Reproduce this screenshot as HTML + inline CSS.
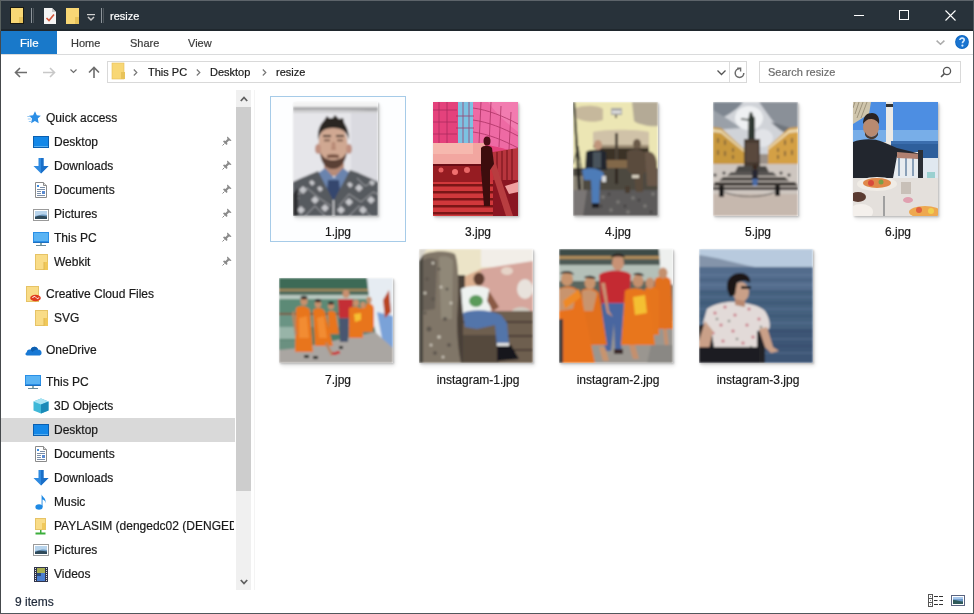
<!DOCTYPE html>
<html><head><meta charset="utf-8">
<style>
*{margin:0;padding:0;box-sizing:border-box}
html,body{width:974px;height:614px;overflow:hidden;background:#fff}
body{position:relative;will-change:transform;-webkit-text-stroke:0.2px currentColor;font-family:"Liberation Sans",sans-serif;font-size:12px;line-height:14px;color:#000}
.a{position:absolute}
svg{position:absolute;overflow:visible}
.t{position:absolute;white-space:nowrap;line-height:14px}
.nt{position:absolute;white-space:nowrap;line-height:14px;font-size:12px;color:#1a1a1a}
.ph{position:absolute;box-shadow:1px 1px 2px rgba(0,0,0,.22),2px 3px 4px rgba(0,0,0,.10)}
.ph svg{left:0;top:0}
.lbl{position:absolute;white-space:nowrap;line-height:14px;font-size:12px;color:#1a1a1a;text-align:center;width:140px}
</style></head><body>
<!-- TITLE BAR -->
<div class="a" style="left:0;top:0;width:974px;height:31px;background:#28323a"></div>
<div class="a" style="left:0;top:0;width:974px;height:1px;background:#5d646a"></div>
<div class="a" style="left:0;top:29px;width:974px;height:2px;background:#1f272d"></div>
<!-- QAT icons -->
<svg style="left:10px;top:7px" width="14" height="17" viewBox="0 0 14 17">
  <rect x="0.5" y="0.5" width="13" height="16" fill="#f8d775" stroke="#1a1a12" stroke-width="1"/>
  <rect x="9" y="10" width="4" height="6" fill="#e8c35a"/>
</svg>
<div class="a" style="left:31px;top:8px;width:1px;height:15px;background:#8d949a"></div>
<div class="a" style="left:33px;top:8px;width:1px;height:15px;background:#4d555b"></div>
<svg style="left:44px;top:8px" width="12" height="16" viewBox="0 0 12 16">
  <path d="M0 0H8L12 4V16H0Z" fill="#f4f4f4"/>
  <path d="M8 0V4H12" fill="#c9c9c9"/>
  <path d="M2.5 10L5 12.5L10 6.5" stroke="#d2553a" stroke-width="1.6" fill="none"/>
</svg>
<svg style="left:66px;top:8px" width="14" height="16" viewBox="0 0 14 16">
  <rect x="0" y="0" width="13" height="16" fill="#f8d775"/>
  <rect x="9" y="9" width="4" height="7" fill="#e8c35a"/>
</svg>
<svg style="left:87px;top:14px" width="8" height="7" viewBox="0 0 8 7">
  <rect x="0" y="0" width="8" height="1.2" fill="#d0d0d0"/>
  <path d="M1 3L4 6L7 3" stroke="#c8c8c8" stroke-width="1.5" fill="none"/>
</svg>
<div class="a" style="left:101px;top:8px;width:1px;height:15px;background:#8d949a"></div>
<div class="a" style="left:103px;top:8px;width:1px;height:15px;background:#4d555b"></div>
<div class="t" style="left:110px;top:9px;font-size:11px;color:#fff">resize</div>
<!-- window controls -->
<div class="a" style="left:854px;top:15px;width:10px;height:1px;background:#fff"></div>
<div class="a" style="left:899px;top:10px;width:10px;height:10px;border:1px solid #fff"></div>
<svg style="left:945px;top:10px" width="11" height="11" viewBox="0 0 11 11">
  <path d="M0.5 0.5L10.5 10.5M10.5 0.5L0.5 10.5" stroke="#fff" stroke-width="1.1"/>
</svg>
<!-- RIBBON TABS -->
<div class="a" style="left:1px;top:31px;width:56px;height:23px;background:#1979ca"></div>
<div class="t" style="left:20px;top:36px;font-size:11.5px;color:#fff">File</div>
<div class="t" style="left:71px;top:36px;font-size:11px;color:#3c3c3c">Home</div>
<div class="t" style="left:130px;top:36px;font-size:11px;color:#3c3c3c">Share</div>
<div class="t" style="left:188px;top:36px;font-size:11px;color:#3c3c3c">View</div>
<div class="a" style="left:1px;top:54px;width:972px;height:1px;background:#dadbdc"></div>
<svg style="left:936px;top:40px" width="9" height="5" viewBox="0 0 9 5">
  <path d="M0.6 0.6L4.5 4.2L8.4 0.6" stroke="#ababab" stroke-width="1.5" fill="none"/>
</svg>
<svg style="left:955px;top:35px" width="14" height="14" viewBox="0 0 14 14">
  <circle cx="7" cy="7" r="6.9" fill="#0b66c2"/>
  <circle cx="7" cy="7" r="6" fill="#1a74d0"/>
  <path d="M4.9 5C4.9 3.7 5.9 3.1 7.1 3.1C8.4 3.1 9.2 3.9 9.2 4.9C9.2 6.3 7.4 6.5 7.4 8.3" stroke="#d8ecff" stroke-width="1.6" fill="none"/>
  <circle cx="7.4" cy="10.6" r="1.1" fill="#d8ecff"/>
</svg>
<!-- ADDRESS ROW -->
<svg style="left:14px;top:67px" width="13" height="11" viewBox="0 0 13 11">
  <path d="M13 5.5H1.5M6 1L1.5 5.5L6 10" stroke="#6d6d6d" stroke-width="1.6" fill="none"/>
</svg>
<svg style="left:43px;top:67px" width="13" height="11" viewBox="0 0 13 11">
  <path d="M0 5.5H11.5M7 1L11.5 5.5L7 10" stroke="#c8c8c8" stroke-width="1.6" fill="none"/>
</svg>
<svg style="left:70px;top:69px" width="7" height="5" viewBox="0 0 7 5">
  <path d="M0.5 0.5L3.5 3.5L6.5 0.5" stroke="#6d6d6d" stroke-width="1.2" fill="none"/>
</svg>
<svg style="left:88px;top:66px" width="12" height="12" viewBox="0 0 12 12">
  <path d="M6 12V1.5M1 6.5L6 1.5L11 6.5" stroke="#6d6d6d" stroke-width="1.6" fill="none"/>
</svg>
<div class="a" style="left:107px;top:61px;width:640px;height:22px;border:1px solid #d9d9d9"></div>
<svg style="left:112px;top:63px" width="13" height="17" viewBox="0 0 13 17">
  <rect x="0" y="0" width="12" height="16" fill="#f8d775" stroke="#e3bd58" stroke-width="0.6"/>
  <rect x="9" y="9" width="4" height="7" fill="#e8c35a"/>
</svg>
<svg style="left:133px;top:69px" width="5" height="7" viewBox="0 0 5 7">
  <path d="M0.8 0.5L3.8 3.5L0.8 6.5" stroke="#777" stroke-width="1.2" fill="none"/>
</svg>
<div class="t" style="left:148px;top:65px;font-size:11px;color:#1a1a1a">This PC</div>
<svg style="left:196px;top:69px" width="5" height="7" viewBox="0 0 5 7">
  <path d="M0.8 0.5L3.8 3.5L0.8 6.5" stroke="#777" stroke-width="1.2" fill="none"/>
</svg>
<div class="t" style="left:210px;top:65px;font-size:11px;color:#1a1a1a">Desktop</div>
<svg style="left:262px;top:69px" width="5" height="7" viewBox="0 0 5 7">
  <path d="M0.8 0.5L3.8 3.5L0.8 6.5" stroke="#777" stroke-width="1.2" fill="none"/>
</svg>
<div class="t" style="left:276px;top:65px;font-size:11px;color:#1a1a1a">resize</div>
<svg style="left:717px;top:70px" width="9" height="6" viewBox="0 0 9 6">
  <path d="M0.5 0.5L4.5 4.5L8.5 0.5" stroke="#555" stroke-width="1.3" fill="none"/>
</svg>
<div class="a" style="left:729px;top:62px;width:1px;height:20px;background:#dcdcdc"></div>
<svg style="left:734px;top:67px" width="11" height="11" viewBox="0 0 11 11">
  <path d="M5.5 1.8A4.3 4.3 0 1 0 9.8 6.1" stroke="#6d6d6d" stroke-width="1.5" fill="none"/>
  <path d="M3.2 1.2H6.6V4.6" stroke="#6d6d6d" stroke-width="1.4" fill="none"/>
</svg>
<div class="a" style="left:759px;top:61px;width:202px;height:22px;border:1px solid #d9d9d9"></div>
<div class="t" style="left:768px;top:65px;font-size:11px;color:#6d6d6d">Search resize</div>
<svg style="left:940px;top:66px" width="12" height="12" viewBox="0 0 12 12">
  <circle cx="7" cy="5" r="3.6" stroke="#555" stroke-width="1.3" fill="none"/>
  <path d="M4.4 7.6L1 11" stroke="#555" stroke-width="1.6"/>
</svg>
<!-- NAV PANE -->
<div class="a" style="left:1px;top:418px;width:234px;height:24px;background:#d9d9d9"></div>
<div class="a" style="left:236px;top:90px;width:15px;height:500px;background:#f0f0f0"></div>
<div class="a" style="left:254px;top:90px;width:1px;height:500px;background:#f4f4f4"></div>
<div class="a" style="left:236px;top:107px;width:15px;height:384px;background:#cdcdcd"></div>
<svg style="left:240px;top:96px" width="8" height="6" viewBox="0 0 8 6">
  <path d="M0.8 5L4 1.5L7.2 5" stroke="#606060" stroke-width="1.8" fill="none"/>
</svg>
<svg style="left:240px;top:579px" width="8" height="6" viewBox="0 0 8 6">
  <path d="M0.8 1L4 4.5L7.2 1" stroke="#606060" stroke-width="1.8" fill="none"/>
</svg>
<!--NAVITEMS-->
<svg style="left:27px;top:111px" width="14" height="13" viewBox="0 0 14 13"><path d="M8 0.3L9.8 4.3L13.8 4.7L10.8 7.6L11.7 12.2L7.9 9.9L4.1 12.2L5 7.6L2 4.7L6.1 4.3Z" fill="#2b8ee6"/><path d="M0.3 5.5H3.3M0.8 8H3.8M1.8 10.5H4" stroke="#8cc4f2" stroke-width="0.9"/></svg>
<div class="nt" style="left:46px;top:111px">Quick access</div>
<svg style="left:33px;top:136px" width="16" height="12" viewBox="0 0 16 12"><rect x="0" y="0" width="16" height="12" fill="#1488e8"/><rect x="0.5" y="0.5" width="15" height="11" fill="none" stroke="#0a5fb0" stroke-width="1"/><rect x="1" y="10" width="14" height="1" fill="#56aef0"/></svg>
<div class="nt" style="left:54px;top:135px">Desktop</div>
<svg style="left:222px;top:136px" width="10" height="10" viewBox="0 0 10 10"><path d="M5.5 0.5L9.5 4.5L8.5 5L7 4.5L5 6.5L5.5 8L4.5 9L1 5.5L2 4.5L3.5 5L5.5 3L5 1.5Z" fill="#8a8a8a"/><path d="M2.5 7.5L0.5 9.5" stroke="#8a8a8a" stroke-width="1"/></svg>
<svg style="left:33px;top:158px" width="16" height="16" viewBox="0 0 16 16"><path d="M5.5 0H10.5V8H15.5L8 15.5L0.5 8H5.5Z" fill="#2f8ae0"/><path d="M8 0H10.5V8H15.5L8 15.5Z" fill="#1a6fc8"/></svg>
<div class="nt" style="left:54px;top:159px">Downloads</div>
<svg style="left:222px;top:160px" width="10" height="10" viewBox="0 0 10 10"><path d="M5.5 0.5L9.5 4.5L8.5 5L7 4.5L5 6.5L5.5 8L4.5 9L1 5.5L2 4.5L3.5 5L5.5 3L5 1.5Z" fill="#8a8a8a"/><path d="M2.5 7.5L0.5 9.5" stroke="#8a8a8a" stroke-width="1"/></svg>
<svg style="left:35px;top:182px" width="12" height="16" viewBox="0 0 12 16"><path d="M0.5 0.5H8.5L11.5 3.5V15.5H0.5Z" fill="#fff" stroke="#8a8a8a" stroke-width="1"/><path d="M8.5 0.5V3.5H11.5" fill="#ddd" stroke="#8a8a8a" stroke-width="1"/><rect x="2" y="3" width="2" height="2" fill="#3a8ae0"/><rect x="5" y="5" width="5" height="1" fill="#7a8ea8"/><rect x="2" y="7" width="8" height="1" fill="#7a8ea8"/><rect x="2" y="9" width="4" height="1" fill="#7a8ea8"/><rect x="2" y="11" width="4" height="1" fill="#7a8ea8"/><rect x="7" y="9" width="3" height="3" fill="#5a8ad0"/><rect x="2" y="13" width="8" height="1" fill="#7a8ea8"/></svg>
<div class="nt" style="left:54px;top:183px">Documents</div>
<svg style="left:222px;top:184px" width="10" height="10" viewBox="0 0 10 10"><path d="M5.5 0.5L9.5 4.5L8.5 5L7 4.5L5 6.5L5.5 8L4.5 9L1 5.5L2 4.5L3.5 5L5.5 3L5 1.5Z" fill="#8a8a8a"/><path d="M2.5 7.5L0.5 9.5" stroke="#8a8a8a" stroke-width="1"/></svg>
<svg style="left:33px;top:209px" width="16" height="12" viewBox="0 0 16 12"><rect x="0.5" y="0.5" width="15" height="11" fill="#fff" stroke="#9a9a9a" stroke-width="1"/><rect x="2" y="2" width="12" height="8" fill="#6b98c0"/><path d="M2 2H14V6C11 5 8 5.5 2 7Z" fill="#b8d4ec"/><path d="M2 8C6 6 10 7 14 7.5V10H2Z" fill="#2f4a5a"/></svg>
<div class="nt" style="left:54px;top:207px">Pictures</div>
<svg style="left:222px;top:208px" width="10" height="10" viewBox="0 0 10 10"><path d="M5.5 0.5L9.5 4.5L8.5 5L7 4.5L5 6.5L5.5 8L4.5 9L1 5.5L2 4.5L3.5 5L5.5 3L5 1.5Z" fill="#8a8a8a"/><path d="M2.5 7.5L0.5 9.5" stroke="#8a8a8a" stroke-width="1"/></svg>
<svg style="left:33px;top:232px" width="16" height="14" viewBox="0 0 16 14"><rect x="0" y="0" width="16" height="10" fill="#2a8fe6"/><rect x="1" y="1" width="14" height="8" fill="#5ab4f4"/><rect x="0" y="10" width="16" height="1" fill="#1c6fc0"/><rect x="7" y="11" width="2" height="2" fill="#8aa"/><rect x="3" y="13" width="10" height="1" fill="#6b8b9b"/></svg>
<div class="nt" style="left:54px;top:231px">This PC</div>
<svg style="left:222px;top:232px" width="10" height="10" viewBox="0 0 10 10"><path d="M5.5 0.5L9.5 4.5L8.5 5L7 4.5L5 6.5L5.5 8L4.5 9L1 5.5L2 4.5L3.5 5L5.5 3L5 1.5Z" fill="#8a8a8a"/><path d="M2.5 7.5L0.5 9.5" stroke="#8a8a8a" stroke-width="1"/></svg>
<svg style="left:35px;top:254px" width="14" height="16" viewBox="0 0 14 16"><rect x="0.5" y="0.5" width="12" height="15" fill="#f9dc87" stroke="#e6c366" stroke-width="1"/><rect x="9" y="8" width="4" height="8" fill="#f0c85a"/><path d="M9 8V16" stroke="#e0b850" stroke-width="1"/></svg>
<div class="nt" style="left:54px;top:255px">Webkit</div>
<svg style="left:222px;top:256px" width="10" height="10" viewBox="0 0 10 10"><path d="M5.5 0.5L9.5 4.5L8.5 5L7 4.5L5 6.5L5.5 8L4.5 9L1 5.5L2 4.5L3.5 5L5.5 3L5 1.5Z" fill="#8a8a8a"/><path d="M2.5 7.5L0.5 9.5" stroke="#8a8a8a" stroke-width="1"/></svg>
<svg style="left:26px;top:286px" width="16" height="16" viewBox="0 0 16 16"><rect x="0.5" y="0.5" width="12" height="15" fill="#f9dc87" stroke="#e6c366" stroke-width="1"/><ellipse cx="9.5" cy="12" rx="5.3" ry="3.3" fill="#e03c1e"/><path d="M6.5 12C7.5 10 9 10 10 11.5C11 13 12.5 13 12.8 11.5" stroke="#fff" stroke-width="1" fill="none"/></svg>
<div class="nt" style="left:46px;top:287px">Creative Cloud Files</div>
<svg style="left:35px;top:310px" width="14" height="16" viewBox="0 0 14 16"><rect x="0.5" y="0.5" width="12" height="15" fill="#f9dc87" stroke="#e6c366" stroke-width="1"/><rect x="9" y="8" width="4" height="8" fill="#f0c85a"/><path d="M9 8V16" stroke="#e0b850" stroke-width="1"/></svg>
<div class="nt" style="left:54px;top:311px">SVG</div>
<svg style="left:25px;top:345px" width="17" height="11" viewBox="0 0 17 11"><path d="M2 10.5C0.2 10.5 0 8 1.8 7.3C1.8 5 4 4 5.5 5C6.5 1 12 0.5 13 4.5C15.5 4.5 17 6.5 16.5 8.5C16.3 10 15 10.5 14 10.5Z" fill="#1878d4"/><path d="M5.5 5C6.5 1 12 0.5 13 4.5C10 4.5 8 6 7.5 7C6.5 6 6 5.5 5.5 5Z" fill="#0e5fb0"/></svg>
<div class="nt" style="left:46px;top:343px">OneDrive</div>
<svg style="left:25px;top:375px" width="16" height="14" viewBox="0 0 16 14"><rect x="0" y="0" width="16" height="10" fill="#2a8fe6"/><rect x="1" y="1" width="14" height="8" fill="#5ab4f4"/><rect x="0" y="10" width="16" height="1" fill="#1c6fc0"/><rect x="7" y="11" width="2" height="2" fill="#8aa"/><rect x="3" y="13" width="10" height="1" fill="#6b8b9b"/></svg>
<div class="nt" style="left:46px;top:375px">This PC</div>
<svg style="left:33px;top:398px" width="16" height="16" viewBox="0 0 16 16"><path d="M8 0.5L15.5 3.5V12.5L8 15.5L0.5 12.5V3.5Z" fill="#3eb8d8"/><path d="M0.5 3.5L8 6.5L15.5 3.5L8 0.5Z" fill="#a8e4f4"/><path d="M8 6.5V15.5L15.5 12.5V3.5Z" fill="#1a8ab8"/></svg>
<div class="nt" style="left:54px;top:399px">3D Objects</div>
<svg style="left:33px;top:424px" width="16" height="12" viewBox="0 0 16 12"><rect x="0" y="0" width="16" height="12" fill="#1488e8"/><rect x="0.5" y="0.5" width="15" height="11" fill="none" stroke="#0a5fb0" stroke-width="1"/><rect x="1" y="10" width="14" height="1" fill="#56aef0"/></svg>
<div class="nt" style="left:54px;top:423px">Desktop</div>
<svg style="left:35px;top:446px" width="12" height="16" viewBox="0 0 12 16"><path d="M0.5 0.5H8.5L11.5 3.5V15.5H0.5Z" fill="#fff" stroke="#8a8a8a" stroke-width="1"/><path d="M8.5 0.5V3.5H11.5" fill="#ddd" stroke="#8a8a8a" stroke-width="1"/><rect x="2" y="3" width="2" height="2" fill="#3a8ae0"/><rect x="5" y="5" width="5" height="1" fill="#7a8ea8"/><rect x="2" y="7" width="8" height="1" fill="#7a8ea8"/><rect x="2" y="9" width="4" height="1" fill="#7a8ea8"/><rect x="2" y="11" width="4" height="1" fill="#7a8ea8"/><rect x="7" y="9" width="3" height="3" fill="#5a8ad0"/><rect x="2" y="13" width="8" height="1" fill="#7a8ea8"/></svg>
<div class="nt" style="left:54px;top:447px">Documents</div>
<svg style="left:33px;top:470px" width="16" height="16" viewBox="0 0 16 16"><path d="M5.5 0H10.5V8H15.5L8 15.5L0.5 8H5.5Z" fill="#2f8ae0"/><path d="M8 0H10.5V8H15.5L8 15.5Z" fill="#1a6fc8"/></svg>
<div class="nt" style="left:54px;top:471px">Downloads</div>
<svg style="left:35px;top:494px" width="12" height="16" viewBox="0 0 12 16"><ellipse cx="4" cy="13" rx="3.6" ry="2.8" fill="#1f8ae4"/><path d="M6.6 13V0.5C7.5 3 11.5 4.5 10.5 9.5C10.5 6.5 8.5 5.5 7.5 5.5V13Z" fill="#1f8ae4"/></svg>
<div class="nt" style="left:54px;top:495px">Music</div>
<svg style="left:35px;top:518px" width="11" height="17" viewBox="0 0 11 17"><rect x="0.5" y="0.5" width="10" height="11" fill="#f9dc87" stroke="#e6c366" stroke-width="1"/><rect x="7" y="5" width="3.5" height="6.5" fill="#f0c85a"/><rect x="5" y="12" width="1.5" height="3" fill="#3cae3c"/><rect x="0.5" y="14.5" width="10" height="2" fill="#3cae3c"/></svg>
<div class="nt" style="left:54px;top:519px;width:180px;overflow:hidden">PAYLASIM (dengedc02 (DENGEDC0</div>
<svg style="left:33px;top:544px" width="16" height="12" viewBox="0 0 16 12"><rect x="0.5" y="0.5" width="15" height="11" fill="#fff" stroke="#9a9a9a" stroke-width="1"/><rect x="2" y="2" width="12" height="8" fill="#6b98c0"/><path d="M2 2H14V6C11 5 8 5.5 2 7Z" fill="#b8d4ec"/><path d="M2 8C6 6 10 7 14 7.5V10H2Z" fill="#2f4a5a"/></svg>
<div class="nt" style="left:54px;top:543px">Pictures</div>
<svg style="left:34px;top:567px" width="14" height="15" viewBox="0 0 14 15"><rect x="0" y="0" width="14" height="15" fill="#30344a"/><rect x="3" y="1" width="8" height="13" fill="#4a7ed0"/><rect x="3" y="1" width="8" height="5" fill="#a8b050"/><rect x="3" y="6" width="4" height="3" fill="#2a4a7a"/><rect x="1" y="1" width="1" height="1" fill="#e8e8e8"/><rect x="12" y="1" width="1" height="1" fill="#e8e8e8"/><rect x="1" y="3" width="1" height="1" fill="#e8e8e8"/><rect x="12" y="3" width="1" height="1" fill="#e8e8e8"/><rect x="1" y="5" width="1" height="1" fill="#e8e8e8"/><rect x="12" y="5" width="1" height="1" fill="#e8e8e8"/><rect x="1" y="7" width="1" height="1" fill="#e8e8e8"/><rect x="12" y="7" width="1" height="1" fill="#e8e8e8"/><rect x="1" y="9" width="1" height="1" fill="#e8e8e8"/><rect x="12" y="9" width="1" height="1" fill="#e8e8e8"/><rect x="1" y="11" width="1" height="1" fill="#e8e8e8"/><rect x="12" y="11" width="1" height="1" fill="#e8e8e8"/><rect x="1" y="13" width="1" height="1" fill="#e8e8e8"/><rect x="12" y="13" width="1" height="1" fill="#e8e8e8"/></svg>
<div class="nt" style="left:54px;top:567px">Videos</div>
<!--/NAVITEMS-->
<!-- CONTENT -->
<div class="a" style="left:270px;top:96px;width:136px;height:146px;border:1px solid #a6cbe8;background:#fdfeff"></div>
<!--PHOTOS-->
<!-- 1.jpg man portrait -->
<div class="ph" style="left:293px;top:102px;width:85px;height:114px">
<svg width="85" height="114" viewBox="0 0 85 114"><defs><filter id="b1" x="-5%" y="-5%" width="110%" height="110%"><feGaussianBlur stdDeviation="0.8"/></filter><clipPath id="c1"><rect width="85" height="114"/></clipPath></defs>
<g clip-path="url(#c1)" filter="url(#b1)">
<rect width="85" height="114" fill="#e6e6ea"/>
<rect x="58" y="0" width="27" height="114" fill="#dadae0"/>
<rect x="0" y="0" width="85" height="5" fill="#f2f2f2"/>
<path d="M0 5H85V9C60 9 30 8 0 8Z" fill="#a6a6a8"/>
<path d="M0 8C30 8 60 9 85 9V11H0Z" fill="#d0d0d2"/>
<!-- neck -->
<path d="M31 56H51V74H31Z" fill="#b88c78"/>
<!-- face -->
<ellipse cx="40" cy="43" rx="14.5" ry="22" fill="#d0a892"/>
<ellipse cx="25" cy="47" rx="3" ry="5" fill="#c09080"/>
<ellipse cx="56" cy="47" rx="3" ry="5" fill="#c09080"/>
<path d="M27 50C28 63 34 67 40 67C46 67 52 63 54 50C51 56 46 58 40 58C34 58 30 56 27 50Z" fill="#5a4036"/>
<path d="M34 53C37 52 43 52 46 53V56H34Z" fill="#7a5444"/>
<path d="M25 38C24 24 30 16 40 16C50 16 56 24 56 38C54 30 50 26 40 26C30 26 27 30 25 38Z" fill="#2c2622"/>
<path d="M30 20L34 14L38 18L42 13L46 17L50 16L52 24H28Z" fill="#2c2622"/>
<rect x="30" y="33" width="8" height="2" fill="#3a2a24"/>
<rect x="43" y="33" width="8" height="2" fill="#3a2a24"/>
<rect x="31" y="37" width="6" height="2.5" fill="#8a6a5a"/>
<rect x="44" y="37" width="6" height="2.5" fill="#8a6a5a"/>
<path d="M39 40L42 40L43 48H38Z" fill="#b88a76"/>
<!-- collar -->
<path d="M24 72L32 66L41 76L50 66L58 72L55 98H27Z" fill="#6a84ae"/>
<path d="M35 78H46L48 98H33Z" fill="#34466e"/>
<!-- sweater -->
<path d="M0 80C8 76 18 72 25 69L40 98V114H0Z" fill="#575a5e"/>
<path d="M85 80C77 76 67 71 57 68L41 98V114H85Z" fill="#575a5e"/>
<g fill="#d4d4d8" opacity="0.9">
<path d="M6 88L10 84L14 88L10 92Z"/><path d="M18 98L22 94L26 98L22 102Z"/><path d="M4 108L8 104L12 108L8 112Z"/>
<path d="M28 106L32 102L36 106L32 110Z"/><path d="M62 86L66 82L70 86L66 90Z"/><path d="M74 98L78 94L82 98L78 102Z"/>
<path d="M52 100L56 96L60 100L56 104Z"/><path d="M66 108L70 104L74 108L70 112Z"/><path d="M44 108L48 104L52 108L48 112Z"/>
<path d="M16 80L19 78L22 81L19 84Z"/><path d="M76 80L79 78L82 81L79 84Z"/><path d="M54 82L57 80L60 83L57 86Z"/><path d="M24 86L27 84L30 87L27 90Z"/>
</g>
<g stroke="#b0b2b6" stroke-width="1" opacity="0.8" fill="none">
<path d="M0 96L14 86L26 96L38 104M0 100L6 96M12 114L22 104L32 114M46 104L56 92L68 100L80 90L85 92M56 114L66 104L78 114M64 76L72 84L85 78"/>
</g>
<path d="M0 114V92L5 86V114Z" fill="#2e2e30"/>
</g></svg></div>
<!-- 3.jpg red dome -->
<div class="ph" style="left:433px;top:102px;width:85px;height:114px">
<svg width="85" height="114" viewBox="0 0 85 114"><defs><filter id="b3" x="-5%" y="-5%" width="110%" height="110%"><feGaussianBlur stdDeviation="0.7"/></filter><clipPath id="c3"><rect width="85" height="114"/></clipPath></defs>
<g clip-path="url(#c3)" filter="url(#b3)">
<rect width="85" height="114" fill="#c8303a"/>
<rect width="85" height="50" fill="#e4427c"/>
<path d="M40 0H85V52C72 46 56 42 40 42Z" fill="#ee6aa4"/>
<path d="M55 0H85V30C72 20 62 10 55 0Z" fill="#f27cb0"/>
<path d="M25 0H40L40 41H25Z" fill="#7cc2e2"/>
<g stroke="#a02858" stroke-width="0.9" fill="none" opacity="0.75">
<path d="M0 8H24M0 20H24M0 32H24M6 0V42M14 0V42M30 0V41M36 0V41M23 14H41M23 26H41"/>
<path d="M40 6C55 8 70 14 85 22M40 18C55 20 70 26 85 34M40 30C55 32 70 38 85 46M48 0L46 42M58 0L56 43M68 4L66 45M78 10L76 48"/>
</g>
<!-- pale band -->
<path d="M0 41H52V62H0Z" fill="#f2a6a0"/>
<path d="M0 41H40V52H0Z" fill="#f6b8ae"/>
<!-- dark ledge -->
<path d="M0 62H50V80H0Z" fill="#961a22"/>
<circle cx="8" cy="68" r="2.5" fill="#e86060"/>
<circle cx="22" cy="70" r="3" fill="#f07070"/>
<circle cx="34" cy="68" r="3" fill="#e86868"/>
<rect x="0" y="62" width="50" height="2" fill="#6a0e14"/>
<!-- stairs -->
<rect x="0" y="80" width="60" height="34" fill="#d0383a"/>
<g fill="#7a1218">
<rect x="0" y="82" width="60" height="2.5"/><rect x="0" y="89" width="60" height="2.5"/><rect x="0" y="96" width="60" height="2.5"/><rect x="0" y="103" width="60" height="2.5"/><rect x="0" y="110" width="60" height="2.5"/>
</g>
<!-- railing right -->
<path d="M60 50L85 46V78L60 82Z" fill="#b8343c"/>
<g stroke="#6a0e14" stroke-width="0.9"><path d="M64 50V80M69 49V80M74 48V79M79 47V79"/></g>
<path d="M60 78H85V114H60Z" fill="#8a1820"/>
<path d="M72 84L85 80V90L76 92Z" fill="#f0a0a0"/>
<path d="M55 58L61 56L80 114H73Z" fill="#b83c40"/>
<!-- figure -->
<ellipse cx="54" cy="39" rx="3.5" ry="4.5" fill="#4a1014"/>
<path d="M48 46C50 43 57 43 59 46L61 62L57 68V104H51L48 68Z" fill="#3e0c10"/>
</g></svg></div>
<!-- 4.jpg statue bench -->
<div class="ph" style="left:573px;top:102px;width:85px;height:114px">
<svg width="85" height="114" viewBox="0 0 85 114"><defs><filter id="b4" x="-5%" y="-5%" width="110%" height="110%"><feGaussianBlur stdDeviation="0.8"/></filter><clipPath id="c4"><rect width="85" height="114"/></clipPath></defs>
<g clip-path="url(#c4)" filter="url(#b4)">
<rect width="85" height="114" fill="#ece6b4"/>
<path d="M3 6C10 3 25 3 30 7V18C22 21 10 20 3 16Z" fill="#c6b89c"/>
<path d="M59 0H85V24C78 25 66 23 61 19Z" fill="#b4aa96"/>
<rect x="38" y="6" width="11" height="7" fill="#a8a8a8"/>
<rect x="39" y="9" width="9" height="2" fill="#e8e8e8"/>
<rect x="42" y="13" width="2" height="3" fill="#605850"/>
<!-- lintel -->
<path d="M20 30C30 27 66 27 76 30V46H20Z" fill="#d0c2a8"/>
<rect x="20" y="43" width="56" height="3" fill="#9a8a72"/>
<!-- recess -->
<rect x="26" y="46" width="50" height="20" fill="#3a3228"/>
<rect x="42" y="31" width="3" height="30" fill="#4c4238"/>
<!-- lower wall -->
<rect x="0" y="66" width="85" height="24" fill="#4e4840"/>
<rect x="0" y="74" width="10" height="16" fill="#8a8476"/>
<!-- pole -->
<path d="M0 0H2L8 88H5Z" fill="#1e1e1e"/>
<path d="M5 44L0 62M5 44L9 70" stroke="#2a2a2a" stroke-width="1"/>
<!-- ground -->
<path d="M0 88H85V114H0Z" fill="#5c5a5a"/>
<path d="M0 88H14L10 114H0Z" fill="#7a7674"/>
<g fill="#777472"><circle cx="30" cy="95" r="2"/><circle cx="45" cy="100" r="2"/><circle cx="60" cy="96" r="2"/><circle cx="72" cy="104" r="2"/><circle cx="38" cy="108" r="2"/><circle cx="55" cy="110" r="2"/><circle cx="80" cy="92" r="2"/></g>
<g fill="#444242"><circle cx="36" cy="92" r="1.5"/><circle cx="52" cy="104" r="1.5"/><circle cx="66" cy="98" r="1.5"/><circle cx="78" cy="110" r="1.5"/><circle cx="28" cy="104" r="1.5"/></g>
<!-- table -->
<path d="M28 58H60L62 66H26Z" fill="#826848"/>
<rect x="42" y="66" width="3" height="16" fill="#2e2820"/>
<!-- man -->
<ellipse cx="25" cy="43" rx="4" ry="5" fill="#c0967c"/>
<path d="M13 50C15 47 30 47 33 50L34 68H12Z" fill="#23272d"/>
<path d="M20 50H28V66H20Z" fill="#4a525c"/>
<path d="M9 68C14 65 28 66 31 72L30 78H27L26 103H19L18 78H11Z" fill="#4e7cb8"/>
<rect x="19" y="101" width="7" height="5" fill="#1a1a22"/>
<rect x="29" y="74" width="4" height="6" fill="#d8d8d8"/>
<!-- statue -->
<ellipse cx="64" cy="42" rx="4" ry="5" fill="#6a5a48"/>
<path d="M54 50C58 46 68 46 74 52L76 68L70 72V90H63L61 74L54 68Z" fill="#5a4c3e"/>
<path d="M72 50C80 48 84 54 84 64V84H74Z" fill="#6a5848"/>
<rect x="52" y="84" width="5" height="7" fill="#4a3c30"/>
<rect x="59" y="73" width="7" height="3" fill="#d8d0c0"/>
</g></svg></div>
<!-- 5.jpg Duke statue -->
<div class="ph" style="left:713px;top:102px;width:85px;height:114px">
<svg width="85" height="114" viewBox="0 0 85 114"><defs><filter id="b5" x="-5%" y="-5%" width="110%" height="110%"><feGaussianBlur stdDeviation="0.9"/></filter><clipPath id="c5"><rect width="85" height="114"/></clipPath></defs>
<g clip-path="url(#c5)" filter="url(#b5)">
<rect width="85" height="114" fill="#c6bcb4"/>
<!-- sky -->
<rect width="85" height="62" fill="#d0d3d8"/>
<path d="M0 0H30C24 8 14 14 0 20Z" fill="#7e8690"/>
<path d="M0 8C10 14 20 20 28 26L0 28Z" fill="#9aa0a8"/>
<path d="M46 0H85V34C76 30 64 26 56 14Z" fill="#8a9098"/>
<path d="M58 20C66 28 74 34 85 34V28C76 26 66 22 58 20Z" fill="#6e747c"/>
<ellipse cx="36" cy="16" rx="14" ry="12" fill="#eef0f2"/>
<ellipse cx="50" cy="36" rx="10" ry="9" fill="#e2e4e8"/>
<!-- buildings -->
<path d="M0 25L8 26L31 47V62H0Z" fill="#c8983c"/>
<path d="M0 27L8 28L31 48V50L8 31L0 30Z" fill="#e8d8b0"/>
<g fill="#8a6a3a"><rect x="4" y="36" width="2" height="5"/><rect x="11" y="38" width="2" height="5"/><rect x="4" y="48" width="2" height="5"/><rect x="11" y="49" width="2" height="5"/><rect x="19" y="46" width="2" height="4"/><rect x="19" y="53" width="2" height="4"/></g>
<path d="M85 25L76 26L55 45V62H85Z" fill="#d4a044"/>
<path d="M85 27L76 28L55 46V48L76 31L85 30Z" fill="#ecdab2"/>
<g fill="#8a6a3a"><rect x="78" y="36" width="2" height="5"/><rect x="71" y="38" width="2" height="5"/><rect x="78" y="48" width="2" height="5"/><rect x="71" y="49" width="2" height="5"/><rect x="64" y="46" width="2" height="4"/><rect x="64" y="53" width="2" height="4"/></g>
<rect x="31" y="52" width="24" height="10" fill="#9a9088"/>
<!-- plaza -->
<rect x="0" y="62" width="85" height="52" fill="#cec6c0"/>
<rect x="0" y="92" width="85" height="22" fill="#c6b8ae"/>
<!-- statue -->
<path d="M37 10C39 9.5 40 11 39.5 13L42 16L42 37H35L35.5 16Z" fill="#2e3830"/>
<path d="M28 17L37 18" stroke="#2e3830" stroke-width="1.6"/>
<path d="M31 37H47V64H31Z" fill="#463a32"/>
<rect x="33" y="41" width="12" height="19" fill="#5a4a3e"/>
<!-- steps -->
<path d="M25 64H53L56 70H22Z" fill="#4a4644"/>
<path d="M18 70H60L64 74H14Z" fill="#5a5654"/>
<path d="M10 75H72L76 79H6Z" fill="#484442"/>
<path d="M2 80H82L85 84H0Z" fill="#3c3836"/>
<path d="M0 85H85V88H0Z" fill="#3a3634"/>
<rect x="0" y="74" width="85" height="1" fill="#d0c8c0"/>
<rect x="0" y="79" width="85" height="1" fill="#d0c8c0"/>
<rect x="0" y="84" width="85" height="1" fill="#d0c8c0"/>
<!-- figure -->
<ellipse cx="42" cy="65" rx="2.5" ry="3" fill="#3a2a22"/>
<path d="M39 68H45V77H39Z" fill="#262630"/>
<path d="M39 77H45L44 84H40Z" fill="#4a6ca8"/>
<!-- bollards -->
<rect x="6" y="84" width="5" height="11" fill="#1c1c1c"/>
<rect x="62" y="83" width="5" height="11" fill="#1c1c1c"/>
<circle cx="2" cy="73" r="1.5" fill="#222"/><circle cx="11" cy="71" r="1.5" fill="#222"/><circle cx="68" cy="71" r="1.5" fill="#222"/><circle cx="76" cy="73" r="1.5" fill="#222"/>
<path d="M11 90C25 96 50 96 62 90" stroke="#333" stroke-width="0.8" fill="none"/>
</g></svg></div>
<!-- 6.jpg seaside lunch -->
<div class="ph" style="left:853px;top:102px;width:85px;height:114px">
<svg width="85" height="114" viewBox="0 0 85 114"><defs><filter id="b6" x="-5%" y="-5%" width="110%" height="110%"><feGaussianBlur stdDeviation="0.7"/></filter><clipPath id="c6"><rect width="85" height="114"/></clipPath></defs>
<g clip-path="url(#c6)" filter="url(#b6)">
<rect width="85" height="114" fill="#dcd8d4"/>
<!-- sky -->
<rect x="0" y="0" width="85" height="40" fill="#4d8ee2"/>
<rect x="0" y="28" width="85" height="12" fill="#78aee8"/>
<!-- awning -->
<path d="M0 0H18L16 12L0 22Z" fill="#cfc5ac"/>
<g stroke="#8a8068" stroke-width="0.7"><path d="M2 0L0 6M6 0L2 12M10 0L4 16M14 0L8 16"/></g>
<!-- pillar -->
<rect x="33" y="0" width="7" height="42" fill="#eceae6"/>
<rect x="33" y="2" width="7" height="3" fill="#333"/>
<!-- sea -->
<rect x="38" y="39" width="47" height="26" fill="#2f5f9c"/>
<rect x="38" y="39" width="47" height="3" fill="#3a6eae"/>
<!-- railing -->
<path d="M34 50H70V76H34Z" fill="#e8ecf0"/>
<g fill="#8aa0b8"><rect x="38" y="54" width="2" height="20"/><rect x="45" y="54" width="2" height="20"/><rect x="52" y="54" width="2" height="20"/><rect x="59" y="54" width="2" height="20"/></g>
<rect x="34" y="50" width="36" height="3" fill="#f4f4f4"/>
<!-- man -->
<path d="M0 40C8 37 20 36 30 40L44 46L68 52V57L44 54L40 76H0Z" fill="#22262e"/>
<path d="M44 50L68 52V57L44 56Z" fill="#b08070"/>
<ellipse cx="18" cy="25" rx="8" ry="10" fill="#b88a70"/>
<path d="M10 22C10 14 14 11 19 11C24 11 27 15 26 22C24 18 20 17 18 17C14 17 12 19 10 22Z" fill="#2a2420"/>
<path d="M12 30C14 36 22 37 25 30V33C22 39 14 38 12 33Z" fill="#4a3a30"/>
<!-- bottle & glass right -->
<rect x="65" y="48" width="5" height="28" fill="#2a2e34"/>
<rect x="70" y="56" width="15" height="20" fill="#e0e8f0"/>
<rect x="74" y="70" width="8" height="10" fill="#9ad0d0"/>
<!-- table -->
<rect x="0" y="76" width="85" height="38" fill="#e4e0dc"/>
<ellipse cx="24" cy="82" rx="20" ry="7" fill="#f0ece6"/>
<ellipse cx="24" cy="81" rx="14" ry="5" fill="#e0884a"/>
<circle cx="18" cy="81" r="3" fill="#d84a3a"/><circle cx="28" cy="80" r="2.5" fill="#7aa04a"/>
<rect x="48" y="80" width="10" height="12" fill="#c8c0b8"/>
<ellipse cx="55" cy="98" rx="5" ry="3" fill="#e0a0b0"/>
<ellipse cx="5" cy="95" rx="8" ry="5" fill="#5a3a30"/>
<ellipse cx="8" cy="110" rx="12" ry="8" fill="#f4f0ec"/>
<ellipse cx="72" cy="110" rx="16" ry="6" fill="#eea850"/>
<circle cx="66" cy="108" r="3" fill="#e06040"/><circle cx="78" cy="109" r="3" fill="#f0d050"/>
<rect x="30" y="94" width="2" height="20" fill="#a0a0a0"/>
</g></svg></div>
<!-- 7.jpg monks landscape -->
<div class="ph" style="left:279px;top:278px;width:114px;height:85px">
<svg width="114" height="85" viewBox="0 0 114 85"><defs><filter id="b7" x="-5%" y="-5%" width="110%" height="110%"><feGaussianBlur stdDeviation="0.8"/></filter><clipPath id="c7"><rect width="114" height="85"/></clipPath></defs>
<g clip-path="url(#c7)" filter="url(#b7)">
<rect width="114" height="85" fill="#a6a29e"/>
<!-- wall stripes -->
<rect x="0" y="0" width="96" height="72" fill="#4e7c68"/>
<rect x="0" y="0" width="96" height="11" fill="#3c6a56"/>
<rect x="0" y="11" width="96" height="2" fill="#a88a58"/>
<rect x="0" y="13" width="96" height="4" fill="#506c5c"/>
<rect x="0" y="17" width="96" height="4" fill="#b8c8c0"/>
<rect x="0" y="21" width="96" height="14" fill="#5c8a76"/>
<rect x="0" y="35" width="96" height="2" fill="#7a5a40"/>
<rect x="0" y="37" width="96" height="12" fill="#6a9484"/>
<rect x="0" y="49" width="20" height="12" fill="#98b4a8"/>
<rect x="0" y="62" width="20" height="10" fill="#6a9080"/>
<!-- right side white/blue -->
<path d="M88 0H114V62L100 66L92 36Z" fill="#e6ecf2"/>
<path d="M98 34L114 38V72L104 66Z" fill="#7aa2d8"/>
<path d="M104 22L110 12L112 34L106 40Z" fill="#b84424"/>
<!-- ground -->
<path d="M0 72L20 70L96 54L114 70V85H0Z" fill="#aaa6a2"/>
<!-- man -->
<ellipse cx="67" cy="16" rx="3.5" ry="4" fill="#c89070"/>
<path d="M59 21H74L73 40H60Z" fill="#c42e34"/>
<path d="M60 40H70L69 64H61Z" fill="#4a5670"/>
<!-- monks -->
<g fill="#e8741a">
<path d="M17 30C20 27 28 27 31 32L34 74H16Z"/>
<path d="M34 32C37 29 44 29 46 34L54 68H36Z"/>
<path d="M49 34C51 32 56 32 57 36L60 56H50Z"/>
<path d="M70 30C74 28 82 28 84 34L84 60H70Z"/>
<path d="M82 30C86 28 90 28 92 34L94 54H84Z"/>
<path d="M87 26C90 24 94 26 95 30V50H88Z"/>
</g>
<g fill="#f28c30"><path d="M20 40L28 38L30 60H20Z"/><path d="M38 40L45 38L48 60H40Z"/></g>
<path d="M75 36L82 35L82 42L76 44Z" fill="#f6c030"/>
<g fill="#c8906c"><ellipse cx="25" cy="23" rx="3.5" ry="4.5"/><ellipse cx="39" cy="26" rx="3.2" ry="4"/><ellipse cx="52" cy="28" rx="3" ry="3.5"/><ellipse cx="77" cy="25" rx="3" ry="3.5"/><ellipse cx="84" cy="27" rx="2.6" ry="3.2"/><ellipse cx="90" cy="22" rx="2.6" ry="3.2"/></g>
<g fill="#b88462"><path d="M15 32L18 56L16 58L13 36Z"/><path d="M48 64L54 76L52 78L46 66Z"/></g>
<g fill="#2a2220"><ellipse cx="25" cy="19.5" rx="3.5" ry="1.8"/><ellipse cx="39" cy="22.5" rx="3.2" ry="1.8"/><ellipse cx="52" cy="25" rx="3" ry="1.6"/></g>
<g fill="#262626"><rect x="25" y="77" width="5" height="3"/><rect x="34" y="78" width="5" height="3"/><rect x="60" y="68" width="4" height="3"/></g>
<g fill="#c83838"><rect x="53" y="74" width="5" height="3"/><rect x="57" y="73" width="4" height="3"/></g>
</g></svg></div>
<!-- instagram-1 -->
<div class="ph" style="left:419px;top:249px;width:114px;height:114px">
<svg width="114" height="114" viewBox="0 0 114 114"><defs><filter id="b8" x="-5%" y="-5%" width="110%" height="110%"><feGaussianBlur stdDeviation="0.9"/></filter><clipPath id="c8"><rect width="114" height="114"/></clipPath></defs>
<g clip-path="url(#c8)" filter="url(#b8)">
<rect width="114" height="114" fill="#6e6254"/>
<!-- background -->
<rect x="0" y="0" width="114" height="40" fill="#ece4c8"/>
<rect x="62" y="0" width="52" height="18" fill="#f2eee8"/>
<path d="M40 34L62 20L114 12V70H40Z" fill="#d6a69c"/>
<path d="M40 30L62 20V40L40 42Z" fill="#dcb090"/>
<ellipse cx="106" cy="40" rx="8" ry="10" fill="#e8e2dc"/>
<ellipse cx="88" cy="22" rx="6" ry="4" fill="#e6d4c8"/>
<ellipse cx="102" cy="64" rx="10" ry="6" fill="#d0cac0"/>
<!-- dark behind pillar -->
<path d="M34 26H46V114H34Z" fill="#4a4038"/>
<!-- steps -->
<path d="M44 62H114V114H44Z" fill="#6e5e50"/>
<g fill="#4a3e34"><rect x="44" y="72" width="70" height="2"/><rect x="44" y="86" width="70" height="2"/><rect x="44" y="100" width="70" height="2"/></g>
<path d="M44 86H80V114H44Z" fill="#54483c"/>
<!-- man -->
<ellipse cx="60" cy="30" rx="5.5" ry="6.5" fill="#5e4030"/>
<path d="M42 40C48 36 64 36 70 40L72 66H44Z" fill="#eef2f0"/>
<ellipse cx="57" cy="52" rx="7" ry="6" fill="#5a9a5a"/>
<path d="M70 42L80 58L74 62L68 52Z" fill="#8a5a44"/>
<path d="M44 64C52 60 70 60 82 66L88 74L90 96L78 98L76 76L58 80L46 78Z" fill="#5274aa"/>
<path d="M78 96L92 96L100 110L78 112Z" fill="#16161a"/>
<rect x="78" y="94" width="12" height="3" fill="#e0e0e0"/>
<!-- pillar -->
<path d="M0 114V8C6 2 28 0 36 5C40 14 40 40 38 70C38 90 40 104 42 114Z" fill="#807668"/>
<path d="M3 12C8 8 14 8 18 12L16 60L3 62Z" fill="#6a6258"/>
<path d="M20 8C26 6 32 8 34 12L33 70H22Z" fill="#908878"/>
<path d="M0 0H4V114H0Z" fill="#4a4640"/>
<g fill="#5e5850"><circle cx="8" cy="30" r="2"/><circle cx="20" cy="20" r="1.5"/><circle cx="14" cy="50" r="2"/><circle cx="26" cy="70" r="2"/><circle cx="10" cy="80" r="2.5"/><circle cx="30" cy="96" r="2"/><circle cx="16" cy="104" r="2"/><circle cx="6" cy="64" r="1.5"/><circle cx="28" cy="40" r="1.5"/></g>
<g fill="#c8c2b6"><circle cx="14" cy="14" r="1.5"/><circle cx="22" cy="38" r="1.5"/><circle cx="6" cy="44" r="1.5"/><circle cx="20" cy="88" r="1.8"/><circle cx="32" cy="54" r="1.5"/><circle cx="12" cy="96" r="1.5"/><circle cx="24" cy="108" r="1.5"/></g>
<path d="M0 0H8L0 12Z" fill="#d8d4cc"/>
</g></svg></div>
<!-- instagram-2 -->
<div class="ph" style="left:559px;top:249px;width:114px;height:114px">
<svg width="114" height="114" viewBox="0 0 114 114"><defs><filter id="b9" x="-5%" y="-5%" width="110%" height="110%"><feGaussianBlur stdDeviation="0.9"/></filter><clipPath id="c9"><rect width="114" height="114"/></clipPath></defs>
<g clip-path="url(#c9)" filter="url(#b9)">
<rect width="114" height="114" fill="#9a9690"/>
<!-- background -->
<rect x="0" y="0" width="114" height="7" fill="#3e4c46"/>
<rect x="0" y="7" width="114" height="3" fill="#b08c5a"/>
<rect x="0" y="10" width="114" height="6" fill="#4e5a54"/>
<rect x="0" y="16" width="114" height="16" fill="#b4c0b8"/>
<rect x="0" y="32" width="114" height="40" fill="#5a665e"/>
<path d="M100 0H114V36L102 30Z" fill="#eef0ee"/>
<!-- man -->
<ellipse cx="59" cy="14" rx="6" ry="7.5" fill="#c89274"/>
<path d="M52 9C53 3 65 3 66 9C63 7 55 7 52 9Z" fill="#2a2420"/>
<path d="M40 26C46 20 68 20 72 26L70 56H42Z" fill="#c42c30"/>
<path d="M43 54H66L62 102H56L55 74L52 102H46Z" fill="#4a66a0"/>
<rect x="55" y="100" width="9" height="5" fill="#3a2a2a"/>
<path d="M42 34L48 64L54 68L50 62L46 34Z" fill="#c89274"/>
<!-- monk 5 right -->
<path d="M96 30C100 26 110 26 112 32L114 80H96Z" fill="#e2701e"/>
<ellipse cx="104" cy="24" rx="4.5" ry="5.5" fill="#c4906e"/>
<path d="M104 80L106 100L110 100L108 80Z" fill="#c4906e"/>
<!-- monk 4 -->
<path d="M86 40C90 36 98 36 100 42L100 86H84Z" fill="#e6741e"/>
<ellipse cx="91" cy="34" rx="4.5" ry="5.5" fill="#c4906e"/>
<!-- monk 3 -->
<path d="M66 42C70 38 86 38 90 46L96 96H62Z" fill="#e8761e"/>
<ellipse cx="79" cy="32" rx="5.5" ry="6.5" fill="#c4906e"/>
<path d="M74 26C75 23 84 23 85 27C82 26 77 26 74 26Z" fill="#2a2420"/>
<path d="M74 48L86 46L88 64L76 66Z" fill="#f4c030"/>
<path d="M70 96L74 110L80 110L76 96Z" fill="#c4906e"/>
<!-- monk 2 -->
<path d="M22 42C26 38 36 38 40 44L48 96H26Z" fill="#e2701c"/>
<path d="M23 42C27 40 34 40 38 44L34 62L24 62Z" fill="#c8946e"/>
<ellipse cx="31" cy="34" rx="5.5" ry="6.5" fill="#c8946e"/>
<path d="M25 29C26 26 36 26 37 30C34 29 28 29 25 29Z" fill="#2a2420"/>
<path d="M40 98L44 112H50L46 98Z" fill="#c8946e"/>
<!-- monk 1 left big -->
<path d="M0 40C6 36 18 36 22 46L36 114H0Z" fill="#e8721a"/>
<path d="M0 40C6 38 14 38 18 42L14 60L0 62Z" fill="#c8946e"/>
<path d="M4 52L20 40L22 48L6 60Z" fill="#ee8a28"/>
<ellipse cx="8" cy="30" rx="6" ry="7" fill="#c8946e"/>
<path d="M1 25C2 21 14 21 15 26C12 24 5 24 1 25Z" fill="#2a2420"/>
<path d="M0 70H4V114H0Z" fill="#3a3a3a"/>
<!-- ground -->
<path d="M92 96H114V114H88Z" fill="#8a8884"/>
</g></svg></div>
<!-- instagram-3 -->
<div class="ph" style="left:699px;top:249px;width:114px;height:114px">
<svg width="114" height="114" viewBox="0 0 114 114"><defs><filter id="b10" x="-5%" y="-5%" width="110%" height="110%"><feGaussianBlur stdDeviation="0.9"/></filter><clipPath id="c10"><rect width="114" height="114"/></clipPath></defs>
<g clip-path="url(#c10)" filter="url(#b10)">
<rect width="114" height="114" fill="#44607e"/>
<rect x="0" y="0" width="114" height="19" fill="#b8cade"/>
<path d="M0 6C16 8 36 14 56 18H114V20H0Z" fill="#8494aa"/>
<rect x="0" y="18" width="114" height="24" fill="#526c8c"/>
<rect x="0" y="80" width="114" height="34" fill="#3c5474"/>
<g stroke="#7690ae" stroke-width="0.8" opacity="0.6"><path d="M0 26H114M0 36H114M0 48H114M0 60H114M0 74H114M0 90H114M0 104H114"/></g>
<g stroke="#2e4462" stroke-width="0.8" opacity="0.6"><path d="M0 31H114M0 42H114M0 54H114M0 67H114M0 82H114M0 97H114"/></g>
<!-- chair -->
<path d="M0 76H16V100H0Z" fill="#202226"/>
<path d="M56 84L66 80V114H56Z" fill="#202226"/>
<!-- man -->
<path d="M8 60C16 54 30 52 38 53C48 54 60 56 66 62C70 68 72 76 70 80L58 82V104H16L12 80L4 74Z" fill="#e2dad8"/>
<g fill="#c45e6e" opacity="0.8"><circle cx="16" cy="64" r="1.6"/><circle cx="26" cy="58" r="1.6"/><circle cx="36" cy="66" r="1.6"/><circle cx="22" cy="76" r="1.6"/><circle cx="50" cy="60" r="1.6"/><circle cx="34" cy="82" r="1.6"/><circle cx="48" cy="76" r="1.6"/><circle cx="24" cy="92" r="1.6"/><circle cx="44" cy="94" r="1.6"/><circle cx="60" cy="70" r="1.6"/><circle cx="54" cy="88" r="1.6"/><circle cx="14" cy="84" r="1.6"/></g>
<g fill="#5e6a5c" opacity="0.7"><circle cx="30" cy="72" r="1.3"/><circle cx="18" cy="70" r="1.3"/><circle cx="42" cy="56" r="1.3"/><circle cx="52" cy="98" r="1.3"/><circle cx="38" cy="90" r="1.3"/><circle cx="62" cy="78" r="1.3"/></g>
<path d="M6 72L0 92V100L10 100L14 82Z" fill="#caa088"/>
<path d="M60 80L66 98L72 104L80 102L74 98L68 78Z" fill="#caa088"/>
<path d="M0 98H60V114H0Z" fill="#1c1e22"/>
<ellipse cx="42" cy="43" rx="8" ry="10" fill="#caa088"/>
<path d="M36 50L46 52V58L36 56Z" fill="#b88870"/>
<path d="M28 40C27 28 34 24 42 24C50 25 52 30 51 34C46 31 41 32 38 34L36 46L31 48Z" fill="#1a1614"/>
<path d="M42 37H52V40H42Z" fill="#141414"/>
</g></svg></div>
<!-- labels -->
<div class="lbl" style="left:268px;top:225px">1.jpg</div>
<div class="lbl" style="left:408px;top:225px">3.jpg</div>
<div class="lbl" style="left:548px;top:225px">4.jpg</div>
<div class="lbl" style="left:688px;top:225px">5.jpg</div>
<div class="lbl" style="left:828px;top:225px">6.jpg</div>
<div class="lbl" style="left:268px;top:373px">7.jpg</div>
<div class="lbl" style="left:408px;top:373px">instagram-1.jpg</div>
<div class="lbl" style="left:548px;top:373px">instagram-2.jpg</div>
<div class="lbl" style="left:688px;top:373px">instagram-3.jpg</div>

<!--/PHOTOS-->
<!-- STATUS -->
<div class="t" style="left:15px;top:595px;font-size:12px;color:#1e2838">9 items</div>
<svg style="left:928px;top:594px" width="17" height="13" viewBox="0 0 17 13">
  <rect x="0.5" y="0.5" width="4" height="12" fill="none" stroke="#555" stroke-width="1"/>
  <path d="M0.5 4.5H4.5M0.5 8.5H4.5" stroke="#555" stroke-width="1"/>
  <rect x="2" y="2" width="1" height="1" fill="#777"/><rect x="2" y="6" width="1" height="1" fill="#777"/><rect x="2" y="10" width="1" height="1" fill="#777"/>
  <path d="M6 2.5H10M11 2.5H15M6 6.5H9.5M11.5 6.5H15M6 10.5H10M11 10.5H15" stroke="#333" stroke-width="1"/>
</svg>
<svg style="left:951px;top:595px" width="14" height="11" viewBox="0 0 14 11">
  <rect x="0.5" y="0.5" width="13" height="10" fill="#fff" stroke="#5a6480" stroke-width="1"/>
  <rect x="2" y="2" width="10" height="7" fill="#6a98c8"/>
  <path d="M2 2H12V4C9 3.5 6 5 2 4Z" fill="#a8c8ec"/>
  <path d="M2 5C5 4.5 8 6 12 6.5V9H2Z" fill="#2f5a5a"/>
</svg>
<!-- FRAME -->
<div class="a" style="left:0;top:0;width:1px;height:614px;background:#45494c"></div>
<div class="a" style="left:0;top:0;width:1px;height:31px;background:#58605e"></div>
<div class="a" style="left:973px;top:0;width:1px;height:614px;background:#50575c"></div>
<div class="a" style="left:0;top:613px;width:974px;height:1px;background:#50575c"></div>
</body></html>
